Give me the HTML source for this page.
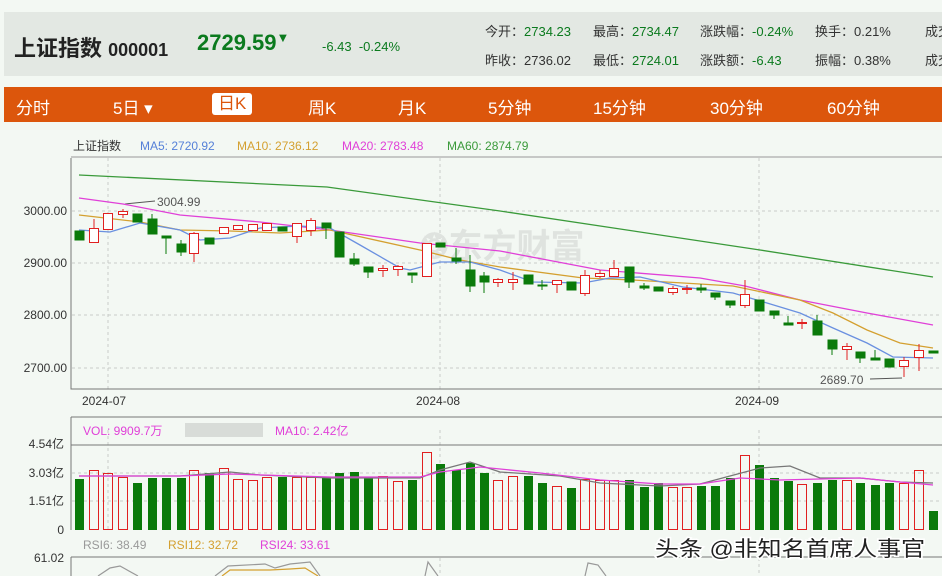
<!DOCTYPE html>
<html><head><meta charset="utf-8"><style>
body{margin:0;width:942px;height:576px;overflow:hidden;background:#f3f8f3;font-family:"Liberation Sans","Noto Sans CJK SC",sans-serif;position:relative}
.a{position:absolute;white-space:nowrap}
.hd{position:absolute;left:4px;top:12px;width:938px;height:64px;background:#e3e8e3}
.bar{position:absolute;left:4px;top:87px;width:938px;height:35px;background:#dc560c}
.bar span{position:absolute;top:7px;color:#fff;font-size:17px}
.g{color:#0b7a1e}
.s{font-size:13px;color:#333}
</style></head><body>
<div class="hd"></div>
<div class="a" style="left:14px;top:31px;font-size:22px;font-weight:bold;color:#222">上证指数 <span style="font-size:18px">000001</span></div>
<div class="a g" style="left:197px;top:30px;font-size:22px;font-weight:bold">2729.59<span style="font-size:13px;vertical-align:top">▼</span></div>
<div class="a g" style="left:322px;top:39px;font-size:13px">-6.43 &nbsp;-0.24%</div>
<div class="a s" style="left:485px;top:21px">今开：<span class="g">2734.23</span></div>
<div class="a s" style="left:593px;top:21px">最高：<span class="g">2734.47</span></div>
<div class="a s" style="left:700px;top:21px">涨跌幅：<span class="g">-0.24%</span></div>
<div class="a s" style="left:815px;top:21px">换手：0.21%</div>
<div class="a s" style="left:925px;top:21px">成交</div>
<div class="a s" style="left:485px;top:50px">昨收：2736.02</div>
<div class="a s" style="left:593px;top:50px">最低：<span class="g">2724.01</span></div>
<div class="a s" style="left:700px;top:50px">涨跌额：<span class="g">-6.43</span></div>
<div class="a s" style="left:815px;top:50px">振幅：0.38%</div>
<div class="a s" style="left:925px;top:50px">成交</div>
<div class="bar">
<span style="left:12px">分时</span><span style="left:109px">5日 ▾</span>
<span style="left:208px;top:6px;background:#fff;color:#dc560c;border-radius:3px;padding:0 6px;height:22px;line-height:22px">日K</span>
<span style="left:304px">周K</span><span style="left:394px">月K</span><span style="left:484px">5分钟</span><span style="left:589px">15分钟</span><span style="left:706px">30分钟</span><span style="left:823px">60分钟</span>
</div>
<svg class="a" style="left:0;top:0" width="942" height="576" font-family="Liberation Sans, Noto Sans CJK SC, sans-serif">
<g font-size="12">
<text x="73" y="150" fill="#333">上证指数</text>
<text x="140" y="150" fill="#5580d8">MA5: 2720.92</text>
<text x="237" y="150" fill="#d4a030">MA10: 2736.12</text>
<text x="342" y="150" fill="#e040d8">MA20: 2783.48</text>
<text x="447" y="150" fill="#3a9a3a">MA60: 2874.79</text>
</g>
<line x1="71" y1="157" x2="942" y2="157" stroke="#999"/>
<g stroke="#c8ccc8" stroke-dasharray="3,3">
<line x1="72" y1="211" x2="942" y2="211"/><line x1="72" y1="263" x2="942" y2="263"/><line x1="72" y1="315" x2="942" y2="315"/><line x1="72" y1="368" x2="942" y2="368"/>
<line x1="108" y1="158" x2="108" y2="389"/><line x1="440" y1="158" x2="440" y2="389"/><line x1="759" y1="158" x2="759" y2="389"/>
<line x1="108" y1="430" x2="108" y2="530"/><line x1="440" y1="430" x2="440" y2="530"/><line x1="759" y1="430" x2="759" y2="530"/>
<line x1="72" y1="473" x2="942" y2="473"/><line x1="72" y1="501" x2="942" y2="501"/>
<line x1="440" y1="558" x2="440" y2="576"/><line x1="759" y1="558" x2="759" y2="576"/>
</g>
<g stroke="#777" fill="none"><path d="M71 158V389H942"/><path d="M71 417H942M71 445H942M71 417V530"/><path d="M71 557H942M71 557V576"/></g>
<g font-size="12" fill="#333" text-anchor="end">
<text x="67" y="215">3000.00</text><text x="67" y="267">2900.00</text><text x="67" y="319">2800.00</text><text x="67" y="372">2700.00</text>
<text x="64" y="448">4.54亿</text><text x="64" y="477">3.03亿</text><text x="64" y="505">1.51亿</text><text x="64" y="534">0</text><text x="64" y="562">61.02</text>
</g>
<g font-size="12" fill="#333"><text x="82" y="405">2024-07</text><text x="416" y="405">2024-08</text><text x="735" y="405">2024-09</text></g>
<text x="420" y="258" font-size="34" font-weight="bold" fill="#dfe3df">❂东方财富</text>
<g stroke="#555" fill="#555" font-size="12"><line x1="125" y1="204" x2="155" y2="201"/><text x="157" y="206" stroke="none">3004.99</text>
<line x1="870" y1="379" x2="902" y2="378"/><text x="820" y="384" stroke="none">2689.70</text></g>
<g fill="none" stroke-width="1.3">
<polyline stroke="#3a9a3a" points="79,175 327,187 500,211 760,250 933,277"/>
<polyline stroke="#e040d8" points="79,198 123,204 180,215 260,222 330,230 420,243 500,251 600,270 700,278 745,286 800,300 867,313 933,325"/>
<polyline stroke="#d4a030" points="79,215 140,222 180,230 230,231 280,233 330,230 420,250 460,260 500,267 583,278 633,280 733,286 800,300 833,313 867,330 900,343 933,348"/>
<polyline stroke="#6a90e0" points="79,230 110,232 140,223 180,230 200,240 230,238 260,228 300,226 330,228 360,245 400,268 410,270 440,262 470,262 500,270 533,282 583,283 610,278 640,277 683,287 733,293 767,303 800,313 833,328 867,343 893,357 933,358"/>
</g>
<g stroke-width="1">
<g fill="#0a7a0a" stroke="#0a7a0a">
<rect x="75" y="231" width="9" height="9"/>
<rect x="133" y="214" width="9" height="8"/>
<line x1="152" y1="214" x2="152" y2="234"/><rect x="148" y="219" width="9" height="15"/>
<line x1="166" y1="236" x2="166" y2="254"/><rect x="162" y="236" width="9" height="2"/>
<line x1="181" y1="240" x2="181" y2="256"/><rect x="177" y="244" width="9" height="8"/>
<rect x="205" y="238" width="9" height="6"/>
<rect x="278" y="227" width="9" height="4"/>
<line x1="326" y1="223" x2="326" y2="239"/><rect x="322" y="223" width="9" height="5"/>
<rect x="335" y="232" width="9" height="25"/>
<line x1="354" y1="253" x2="354" y2="266"/><rect x="350" y="259" width="9" height="5"/>
<line x1="368" y1="267" x2="368" y2="278"/><rect x="364" y="267" width="9" height="5"/>
<line x1="412" y1="273" x2="412" y2="283"/><rect x="408" y="273" width="9" height="2"/>
<rect x="436" y="243" width="9" height="4"/>
<line x1="456" y1="248" x2="456" y2="264"/><rect x="452" y="258" width="9" height="3"/>
<line x1="470" y1="255" x2="470" y2="292"/><rect x="466" y="270" width="9" height="16"/>
<line x1="484" y1="272" x2="484" y2="293"/><rect x="480" y="276" width="9" height="6"/>
<rect x="524" y="275" width="9" height="9"/>
<line x1="542" y1="280" x2="542" y2="290"/><rect x="538" y="285" width="9" height="1"/>
<rect x="567" y="282" width="9" height="8"/>
<line x1="629" y1="267" x2="629" y2="288"/><rect x="625" y="267" width="9" height="15"/>
<line x1="644" y1="283" x2="644" y2="290"/><rect x="640" y="286" width="9" height="2"/>
<rect x="654" y="287" width="9" height="4"/>
<line x1="701" y1="284" x2="701" y2="293"/><rect x="697" y="288" width="9" height="2"/>
<line x1="715" y1="293" x2="715" y2="300"/><rect x="711" y="293" width="9" height="4"/>
<line x1="730" y1="301" x2="730" y2="308"/><rect x="726" y="301" width="9" height="4"/>
<rect x="755" y="300" width="9" height="11"/>
<line x1="774" y1="311" x2="774" y2="319"/><rect x="770" y="311" width="9" height="4"/>
<line x1="788" y1="316" x2="788" y2="325"/><rect x="784" y="323" width="9" height="2"/>
<line x1="817" y1="315" x2="817" y2="335"/><rect x="813" y="321" width="9" height="14"/>
<line x1="832" y1="340" x2="832" y2="355"/><rect x="828" y="340" width="9" height="9"/>
<line x1="860" y1="352" x2="860" y2="363"/><rect x="856" y="352" width="9" height="6"/>
<line x1="875" y1="350" x2="875" y2="360"/><rect x="871" y="358" width="9" height="2"/>
<rect x="885" y="359" width="9" height="8"/>
<rect x="929" y="351" width="9" height="2"/>
</g>
<g fill="#fff" stroke="#e02020">
<line x1="94" y1="219" x2="94" y2="243"/><rect x="89.5" y="228.5" width="9" height="14"/>
<rect x="103.5" y="213.5" width="9" height="16"/>
<line x1="123" y1="209" x2="123" y2="218"/><rect x="118.5" y="211.5" width="9" height="3"/>
<line x1="194" y1="232" x2="194" y2="262"/><rect x="189.5" y="233.5" width="9" height="20"/>
<rect x="219.5" y="227.5" width="9" height="6"/>
<rect x="233.5" y="225.5" width="9" height="4"/>
<rect x="248.5" y="224.5" width="9" height="6"/>
<rect x="262.5" y="223.5" width="9" height="7"/>
<line x1="297" y1="224" x2="297" y2="243"/><rect x="292.5" y="223.5" width="9" height="13"/>
<line x1="311" y1="218" x2="311" y2="236"/><rect x="306.5" y="220.5" width="9" height="10"/>
<line x1="383" y1="265" x2="383" y2="277"/><rect x="378.5" y="268.5" width="9" height="2"/>
<line x1="398" y1="265" x2="398" y2="276"/><rect x="393.5" y="266.5" width="9" height="3"/>
<rect x="422.5" y="243.5" width="9" height="33"/>
<line x1="498" y1="278" x2="498" y2="287"/><rect x="493.5" y="279.5" width="9" height="3"/>
<line x1="513" y1="272" x2="513" y2="290"/><rect x="508.5" y="279.5" width="9" height="3"/>
<line x1="557" y1="281" x2="557" y2="293"/><rect x="552.5" y="280.5" width="9" height="4"/>
<line x1="585" y1="270" x2="585" y2="296"/><rect x="580.5" y="275.5" width="9" height="18"/>
<line x1="600" y1="270" x2="600" y2="278"/><rect x="595.5" y="273.5" width="9" height="3"/>
<line x1="614" y1="260" x2="614" y2="277"/><rect x="609.5" y="268.5" width="9" height="8"/>
<line x1="673" y1="286" x2="673" y2="295"/><rect x="668.5" y="288.5" width="9" height="4"/>
<line x1="687" y1="285" x2="687" y2="294"/><rect x="682.5" y="288.5" width="9" height="1"/>
<line x1="745" y1="280" x2="745" y2="308"/><rect x="740.5" y="294.5" width="9" height="11"/>
<line x1="802" y1="319" x2="802" y2="329"/><rect x="797.5" y="322.5" width="9" height="1"/>
<line x1="847" y1="343" x2="847" y2="360"/><rect x="842.5" y="346.5" width="9" height="3"/>
<line x1="904" y1="357" x2="904" y2="377"/><rect x="899.5" y="360.5" width="9" height="6"/>
<line x1="919" y1="344" x2="919" y2="371"/><rect x="914.5" y="350.5" width="9" height="7"/>
</g>
</g>
<g font-size="12"><text x="83" y="435" fill="#e040d8">VOL: 9909.7万</text><rect x="185" y="423" width="78" height="14" fill="#d8dcd8"/><text x="275" y="435" fill="#e040d8">MA10: 2.42亿</text></g>
<g fill="#0a7a0a">
<rect x="75" y="479" width="9" height="51"/><rect x="133" y="483" width="9" height="47"/><rect x="148" y="478" width="9" height="52"/><rect x="162" y="478" width="9" height="52"/><rect x="177" y="478" width="9" height="52"/><rect x="205" y="473" width="9" height="57"/><rect x="278" y="477" width="9" height="53"/><rect x="322" y="477" width="9" height="53"/><rect x="335" y="473" width="9" height="57"/><rect x="350" y="472" width="9" height="58"/><rect x="364" y="478" width="9" height="52"/><rect x="408" y="480" width="9" height="50"/><rect x="436" y="464" width="9" height="66"/><rect x="452" y="470" width="9" height="60"/><rect x="466" y="463" width="9" height="67"/><rect x="480" y="473" width="9" height="57"/><rect x="524" y="476" width="9" height="54"/><rect x="538" y="483" width="9" height="47"/><rect x="567" y="488" width="9" height="42"/><rect x="625" y="480" width="9" height="50"/><rect x="640" y="487" width="9" height="43"/><rect x="654" y="483" width="9" height="47"/><rect x="697" y="486" width="9" height="44"/><rect x="711" y="486" width="9" height="44"/><rect x="726" y="478" width="9" height="52"/><rect x="755" y="465" width="9" height="65"/><rect x="770" y="478" width="9" height="52"/><rect x="784" y="481" width="9" height="49"/><rect x="813" y="483" width="9" height="47"/><rect x="828" y="480" width="9" height="50"/><rect x="856" y="483" width="9" height="47"/><rect x="871" y="485" width="9" height="45"/><rect x="885" y="483" width="9" height="47"/><rect x="929" y="511" width="9" height="19"/>
</g>
<g fill="none" stroke="#e02020">
<rect x="89.5" y="470.5" width="9" height="59"/><rect x="103.5" y="473.5" width="9" height="56"/><rect x="118.5" y="477.5" width="9" height="52"/><rect x="189.5" y="470.5" width="9" height="59"/><rect x="219.5" y="468.5" width="9" height="61"/><rect x="233.5" y="479.5" width="9" height="50"/><rect x="248.5" y="480.5" width="9" height="49"/><rect x="262.5" y="477.5" width="9" height="52"/><rect x="292.5" y="477.5" width="9" height="52"/><rect x="306.5" y="477.5" width="9" height="52"/><rect x="378.5" y="476.5" width="9" height="53"/><rect x="393.5" y="481.5" width="9" height="48"/><rect x="422.5" y="452.5" width="9" height="77"/><rect x="493.5" y="480.5" width="9" height="49"/><rect x="508.5" y="476.5" width="9" height="53"/><rect x="552.5" y="486.5" width="9" height="43"/><rect x="580.5" y="479.5" width="9" height="50"/><rect x="595.5" y="480.5" width="9" height="49"/><rect x="609.5" y="480.5" width="9" height="49"/><rect x="668.5" y="487.5" width="9" height="42"/><rect x="682.5" y="487.5" width="9" height="42"/><rect x="740.5" y="455.5" width="9" height="74"/><rect x="797.5" y="484.5" width="9" height="45"/><rect x="842.5" y="480.5" width="9" height="49"/><rect x="899.5" y="483.5" width="9" height="46"/><rect x="914.5" y="470.5" width="9" height="59"/>
</g>
<g fill="none" stroke-width="1.3">
<polyline stroke="#777" points="79,476 180,476 230,472 260,475 330,478 420,478 440,470 470,462 500,472 560,476 600,483 660,486 700,484 730,476 760,468 790,466 820,478 860,478 900,482 933,483"/>
<polyline stroke="#e040d8" points="79,476 180,476 230,474 330,477 420,477 440,472 480,467 540,473 600,480 660,484 700,484 740,478 780,480 860,478 900,482 933,485"/>
</g>
<g font-size="12"><text x="83" y="549" fill="#999">RSI6: 38.49</text><text x="168" y="549" fill="#d4a030">RSI12: 32.72</text><text x="260" y="549" fill="#e040d8">RSI24: 33.61</text></g>
<g fill="none" stroke-width="1.2">
<polyline stroke="#999" points="98,576 110,568 120,566 138,576"/>
<polyline stroke="#999" points="215,576 228,566 265,564 275,568 290,564 310,562 320,576"/>
<polyline stroke="#d4a030" points="222,576 230,570 270,570 290,569 305,568 318,576"/>
<polyline stroke="#999" points="425,576 428,562 438,576"/>
<polyline stroke="#999" points="585,576 588,563 598,565 606,576"/>
</g>
<text x="655" y="556" font-size="21" fill="#222" stroke="#fff" stroke-width="3" paint-order="stroke" textLength="270" lengthAdjust="spacingAndGlyphs">头条 @非知名首席人事官</text>
</svg>
</body></html>
